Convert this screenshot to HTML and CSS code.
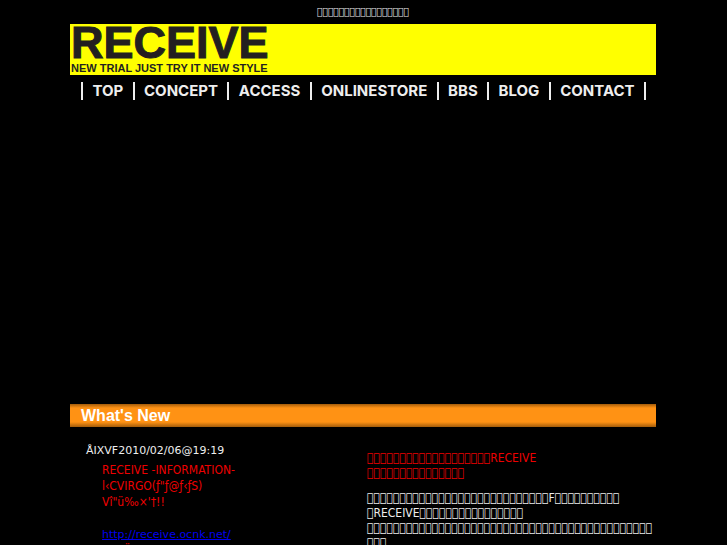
FILE: index.html
```html
<!DOCTYPE html>
<html lang="ja">

<head>
    <meta charset="UTF-8">
    <title>RECEIVE</title>
    <meta name="viewport" content="width=device-width, initial-scale=1.0" />
    <link rel="stylesheet" href="styles.css">
</head>

<body>
    <div class="wrapper">
        <h1 class="catch">&#xE000;&#xE000;&#xE000;&#xE000;&#xE000;&#xE000;&#xE000;&#xE000;&#xE000;&#xE000;&#xE000;&#xE000;&#xE000;&#xE000;&#xE000;&#xE000;&#xE000;</h1>

        <div class="banner">
            <p class="logo">RECEIVE</p>
            <p class="tagline">NEW TRIAL JUST TRY IT NEW STYLE</p>
        </div>

        <ul class="menu">
            <li><a href="#">TOP</a></li>
            <li><a href="#">CONCEPT</a></li>
            <li><a href="#">ACCESS</a></li>
            <li><a href="#">ONLINESTORE</a></li>
            <li><a href="#">BBS</a></li>
            <li><a href="#">BLOG</a></li>
            <li><a href="#">CONTACT</a></li>
        </ul>

        <div class="visual"></div>

        <h2 class="heading">What's New</h2>

        <div class="contents">
            <div class="news">
                <p class="date">ÅIXVF2010/02/06@19:19</p>
                <div class="entry">
                    <p>RECEIVE -INFORMATION-</p>
                    <p>l‹CVIRGO(ƒ"ƒ@ƒ‹ƒS)</p>
                    <p>Vî"ü‰×'†!!</p>
                    <br>
                    <p><a href="http://receive.ocnk.net/">http://receive.ocnk.net/</a></p>
                    <p>@@Ü</p>
                </div>
            </div>
            <div class="about">
                <p class="lead">&#xE000;&#xE000;&#xE000;&#xE000;&#xE000;&#xE000;&#xE000;&#xE000;&#xE000;&#xE000;&#xE000;&#xE000;&#xE000;&#xE000;&#xE000;&#xE000;&#xE000;&#xE000;&#xE000;RECEIVE<br>&#xE000;&#xE000;&#xE000;&#xE000;&#xE000;&#xE000;&#xE000;&#xE000;&#xE000;&#xE000;&#xE000;&#xE000;&#xE000;&#xE000;&#xE000;</p>
                <p>&#xE000;&#xE000;&#xE000;&#xE000;&#xE000;&#xE000;&#xE000;&#xE000;&#xE000;&#xE000;&#xE000;&#xE000;&#xE000;&#xE000;&#xE000;&#xE000;&#xE000;&#xE000;&#xE000;&#xE000;&#xE000;&#xE000;&#xE000;&#xE000;&#xE000;&#xE000;&#xE000;&#xE000;F&#xE000;&#xE000;&#xE000;&#xE000;&#xE000;&#xE000;&#xE000;&#xE000;&#xE000;&#xE000;<br>&#xE000;RECEIVE&#xE000;&#xE000;&#xE000;&#xE000;&#xE000;&#xE000;&#xE000;&#xE000;&#xE000;&#xE000;&#xE000;&#xE000;&#xE000;&#xE000;&#xE000;&#xE000;<br>&#xE000;&#xE000;&#xE000;&#xE000;&#xE000;&#xE000;&#xE000;&#xE000;&#xE000;&#xE000;&#xE000;&#xE000;&#xE000;&#xE000;&#xE000;&#xE000;&#xE000;&#xE000;&#xE000;&#xE000;&#xE000;&#xE000;&#xE000;&#xE000;&#xE000;&#xE000;&#xE000;&#xE000;&#xE000;&#xE000;&#xE000;&#xE000;&#xE000;&#xE000;&#xE000;&#xE000;&#xE000;&#xE000;&#xE000;&#xE000;&#xE000;&#xE000;&#xE000;&#xE000;<br>&#xE000;&#xE000;&#xE000;</p>
            </div>
        </div>
    </div>
</body>

</html>
```

FILE: styles.css
```css
* {
    margin: 0;
    padding: 0;
    box-sizing: border-box;
}

body {
    font-family: "DejaVu Sans Condensed", "DejaVu Sans", sans-serif;
    font-size: 12px;
    line-height: 15px;
    color: #eee;
    background: #000;
}

.wrapper {
    max-width: 800px;
    margin: 0 auto;
    padding: 0 71px 0 70px;
}

.catch {
    padding: 4px 0 5px;
    font-size: 10px;
    font-weight: normal;
    text-align: center;
}

.banner {
    padding: 1px 1px 0;
    background: #ff0;
    color: #231f20;
}

.logo {
    font-family: "Liberation Sans", Arial, sans-serif;
    font-size: 45px;
    font-weight: bold;
    line-height: 36px;
    -webkit-text-stroke: 1px #231f20;
}

.tagline {
    font-family: "Liberation Sans", Arial, sans-serif;
    font-size: 11px;
    font-weight: bold;
    line-height: 14px;
}

.menu {
    display: flex;
    margin: 7px 10px 0 11px;
    border-right: 2px solid #eee;
    list-style: none;
}

.menu li {
    flex: 1 1 auto;
    border-left: 2px solid #eee;
    text-align: center;
}

.menu a {
    display: block;
    font-family: Inter, "Liberation Sans", sans-serif;
    font-size: 15px;
    font-weight: bold;
    line-height: 18px;
    color: #eee;
    text-decoration: none;
}

.visual {
    height: 304px;
}

.heading {
    padding: 1px 11px 0;
    font-family: "Liberation Sans", Arial, sans-serif;
    font-size: 16px;
    line-height: 22px;
    color: #fff;
    background: linear-gradient(#a35c0a, #ff9214 4px, #ff9214 18px, #a35c0a);
}

.contents {
    display: flex;
    padding: 16px 0 0 16px;
}

.news {
    flex: 1;
    line-height: 16px;
}

.date,
.entry a {
    font-family: "DejaVu Sans", sans-serif;
    font-size: 11px;
}

.entry {
    padding: 3px 16px;
    color: #e00;
}

.entry a {
    color: #00e;
}

.about {
    width: 289px;
    padding-top: 8px;
    white-space: nowrap;
}

.lead {
    margin-bottom: 10px;
    color: #e00;
}
```
